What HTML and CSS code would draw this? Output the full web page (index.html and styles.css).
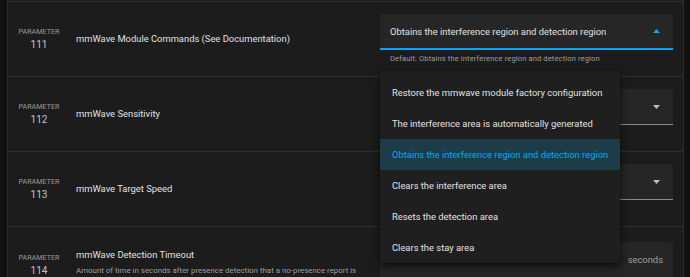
FILE: index.html
```html
<!DOCTYPE html>
<html lang="en">
<head>
    <meta charset="UTF-8">
    <title>Configuration</title>
    <meta name="viewport" content="width=device-width, initial-scale=1.0">
    <link rel="stylesheet" href="styles.css">
</head>
<body>

<div class="card">

    <!-- 111 -->
    <div class="row">
        <div class="param">
            <div class="param-label">PARAMETER</div>
            <div class="param-num">111</div>
        </div>
        <div class="info">
            <div class="title">mmWave Module Commands (See Documentation)</div>
        </div>
        <div class="control">
            <div class="select focused">
                <span class="select-text">Obtains the interference region and detection region</span>
                <svg class="arrow" width="7" height="4" viewBox="0 0 7 4"><path d="M0 4 L3.5 0 L7 4 Z" fill="#03a9f4"/></svg>
            </div>
            <div class="helper">Default: Obtains the interference region and detection region</div>

            <ul class="menu">
                <li>Restore the mmwave module factory configuration</li>
                <li>The interference area is automatically generated</li>
                <li class="selected">Obtains the interference region and detection region</li>
                <li>Clears the interference area</li>
                <li>Resets the detection area</li>
                <li>Clears the stay area</li>
            </ul>
        </div>
    </div>

    <!-- 112 -->
    <div class="row">
        <div class="param">
            <div class="param-label">PARAMETER</div>
            <div class="param-num">112</div>
        </div>
        <div class="info">
            <div class="title">mmWave Sensitivity</div>
        </div>
        <div class="control">
            <div class="select">
                <span class="select-text"></span>
                <svg class="arrow" width="7" height="4" viewBox="0 0 7 4"><path d="M0 0 L3.5 4 L7 0 Z" fill="#bdbdbd"/></svg>
            </div>
            <div class="helper"></div>
        </div>
    </div>

    <!-- 113 -->
    <div class="row">
        <div class="param">
            <div class="param-label">PARAMETER</div>
            <div class="param-num">113</div>
        </div>
        <div class="info">
            <div class="title">mmWave Target Speed</div>
        </div>
        <div class="control">
            <div class="select">
                <span class="select-text"></span>
                <svg class="arrow" width="7" height="4" viewBox="0 0 7 4"><path d="M0 0 L3.5 4 L7 0 Z" fill="#bdbdbd"/></svg>
            </div>
            <div class="helper"></div>
        </div>
    </div>

    <!-- 114 -->
    <div class="row row-tall">
        <div class="param">
            <div class="param-label">PARAMETER</div>
            <div class="param-num">114</div>
        </div>
        <div class="info">
            <div class="title">mmWave Detection Timeout</div>
            <div class="desc">Amount of time in seconds after presence detection that a no-presence report is sent.</div>
        </div>
        <div class="control">
            <div class="select field">
                <span class="select-text"></span>
                <span class="suffix">seconds</span>
            </div>
            <div class="helper"></div>
        </div>
    </div>

</div>

</body>
</html>
```

FILE: styles.css
```css
body {
    margin: 0;
    background-color: #111111;
    font-family: Roboto, "Liberation Sans", sans-serif;
    color: #e1e1e1;
    overflow: hidden;
}

.card {
    margin-left: 7px;
    width: 675px;
    padding-top: 1px;
    background-color: #1c1c1c;
    border-left: 1px solid #2c2c2c;
    border-right: 1px solid #2c2c2c;
    min-height: 300px;
}

.row {
    display: flex;
    align-items: center;
    height: 74px;
    border-top: 1px solid #2e2e2e;
}

.row-tall {
    height: 80px;
}

.param {
    width: 62px;
    text-align: center;
    flex-shrink: 0;
}

.row-tall .param {
    margin-bottom: 4px;
}

.param-label {
    font-size: 7.2px;
    color: #9b9b9b;
    line-height: 10px;
}

.param-num {
    font-size: 10px;
    color: #c4c4c4;
    line-height: 14px;
    margin-top: 1px;
}

.info {
    flex: 1;
    padding-left: 6px;
    padding-right: 20px;
}

.row-tall .info {
    padding-top: 4px;
}

.title {
    font-size: 9.4px;
    line-height: 12px;
}

.desc {
    font-size: 7.9px;
    line-height: 13px;
    color: #9e9e9e;
    margin-top: 3px;
}

.control {
    position: relative;
    width: 293px;
    margin-right: 10px;
    flex-shrink: 0;
}

.select {
    display: flex;
    align-items: center;
    height: 35px;
    padding: 0 12px 0 10px;
    background-color: #262626;
    border-radius: 3px 3px 0 0;
    border-bottom: 1px solid #8c8c8c;
}

.select.focused {
    height: 34px;
    border-bottom: 2px solid #03a9f4;
}

.select-text {
    flex: 1;
    font-size: 9.4px;
    color: #e1e1e1;
}

.arrow {
    display: block;
    margin-right: 1px;
}

.field {
    border-bottom-color: #8c8c8c;
}

.suffix {
    font-size: 9.4px;
    color: #9e9e9e;
    margin-right: -2px;
}

.helper {
    height: 10px;
    padding-top: 4px;
    padding-left: 10px;
    font-size: 7.5px;
    line-height: 10px;
    letter-spacing: 0.02em;
    color: #9e9e9e;
}

/* dropdown list of the open select */
.menu {
    position: absolute;
    top: 57px;
    left: 0;
    width: 240px;
    margin: 0;
    padding: 6px 0 0 0;
    list-style: none;
    background-color: #1f1f1f;
    border-radius: 3px;
    box-shadow: 0 4px 10px rgba(0, 0, 0, 0.55), 0 1px 3px rgba(0, 0, 0, 0.4);
    z-index: 5;
}

.menu li {
    height: 31px;
    line-height: 31px;
    padding-left: 12px;
    font-size: 9.4px;
    color: #e1e1e1;
    white-space: nowrap;
}

.menu li.selected {
    background-color: #1c3c47;
    color: #03a9f4;
}
```
